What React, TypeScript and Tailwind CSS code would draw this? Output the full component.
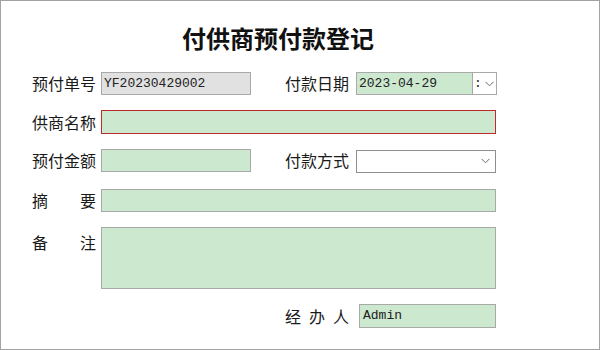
const Chevron = () => (
  <svg width="9" height="6" viewBox="0 0 9 6" className="shrink-0">
    <path d="M0.5 0.8 L4.5 4.8 L8.5 0.8" fill="none" stroke="#6b6b6b" strokeWidth="1" />
  </svg>
);

const cjk = "font-['Noto_Sans_CJK_SC',sans-serif]";
const mono = "font-['Liberation_Mono','Noto_Sans_CJK_SC',monospace]";

const Label = ({ chars, className = "" }: { chars: string[]; className?: string }) => (
  <div className={`w-[64px] flex justify-between text-[16px] leading-[23px] text-[#1a1a1a] ${cjk} ${className}`}>
    {chars.map((c, i) => (
      <span key={i}>{c}</span>
    ))}
  </div>
);

const App = () => {
  return (
    <div className="w-[600px] h-[350px] bg-white border border-[#a3a3a3] overflow-hidden">
      {/* Title */}
      <div className={`w-[554px] mt-[20px] text-center text-[24px] leading-[34px] font-bold text-[#111] ${cjk}`}>
        付供商预付款登记
      </div>

      <div className="pl-[31px] mt-[17px] flex flex-col">
        {/* Row 1 */}
        <div className="flex items-center h-[23px]">
          <Label chars={["预付单号"]} />
          <div className={`ml-[5px] w-[150px] h-[23px] bg-[#e1e1e1] border border-[#a9a9a9] pl-[2px] text-[13px] leading-[21px] text-[#222] ${mono}`}>
            YF20230429002
          </div>
          <Label chars={["付款日期"]} className="ml-[34px]" />
          <div className="ml-[7px] flex h-[23px]">
            <div className={`w-[117px] h-[23px] bg-[#cce8cf] border border-[#a9a9a9] pl-[2px] text-[13px] leading-[21px] text-[#222] ${mono}`}>
              2023-04-29
            </div>
            <div className="w-[24px] h-[23px] border border-l-0 border-[#a9a9a9] bg-white flex items-center gap-[3px] pl-[1px]">
              <span className={`text-[13px] leading-[21px] text-[#222] ${mono}`}>:</span>
              <Chevron />
            </div>
          </div>
        </div>

        {/* Row 2 */}
        <div className="flex items-center h-[24px] mt-[15px]">
          <Label chars={["供商名称"]} />
          <div className="ml-[5px] w-[395px] h-[24px] bg-[#cce8cf] border border-[#c02a2a]" />
        </div>

        {/* Row 3 */}
        <div className="flex items-center h-[24px] mt-[14px]">
          <Label chars={["预付金额"]} />
          <div className="ml-[5px] w-[150px] h-[23px] bg-[#cce8cf] border border-[#a9a9a9]" />
          <Label chars={["付款方式"]} className="ml-[34px]" />
          <div className="ml-[7px] mt-[2px] w-[140px] h-[23px] bg-white border border-[#8f8f8f] flex items-center justify-end pr-[5px]">
            <Chevron />
          </div>
        </div>

        {/* Row 4 */}
        <div className="flex items-center h-[23px] mt-[17px]">
          <Label chars={["摘", "要"]} />
          <div className="ml-[5px] w-[395px] h-[23px] bg-[#cce8cf] border border-[#a9a9a9]" />
        </div>

        {/* Row 5 */}
        <div className="flex items-start mt-[15px]">
          <Label chars={["备", "注"]} className="mt-[4px]" />
          <div className="ml-[5px] w-[395px] h-[62px] bg-[#cce8cf] border border-[#a9a9a9]" />
        </div>

        {/* Row 6 */}
        <div className="flex items-center h-[24px] mt-[15px]">
          <div className="w-[253px]" />
          <Label chars={["经", "办", "人"]} />
          <div className={`ml-[10px] w-[137px] h-[24px] bg-[#cce8cf] border border-[#a9a9a9] pl-[3px] text-[13px] leading-[22px] text-[#222] ${mono}`}>
            Admin
          </div>
        </div>
      </div>
    </div>
  );
};

export default App;
